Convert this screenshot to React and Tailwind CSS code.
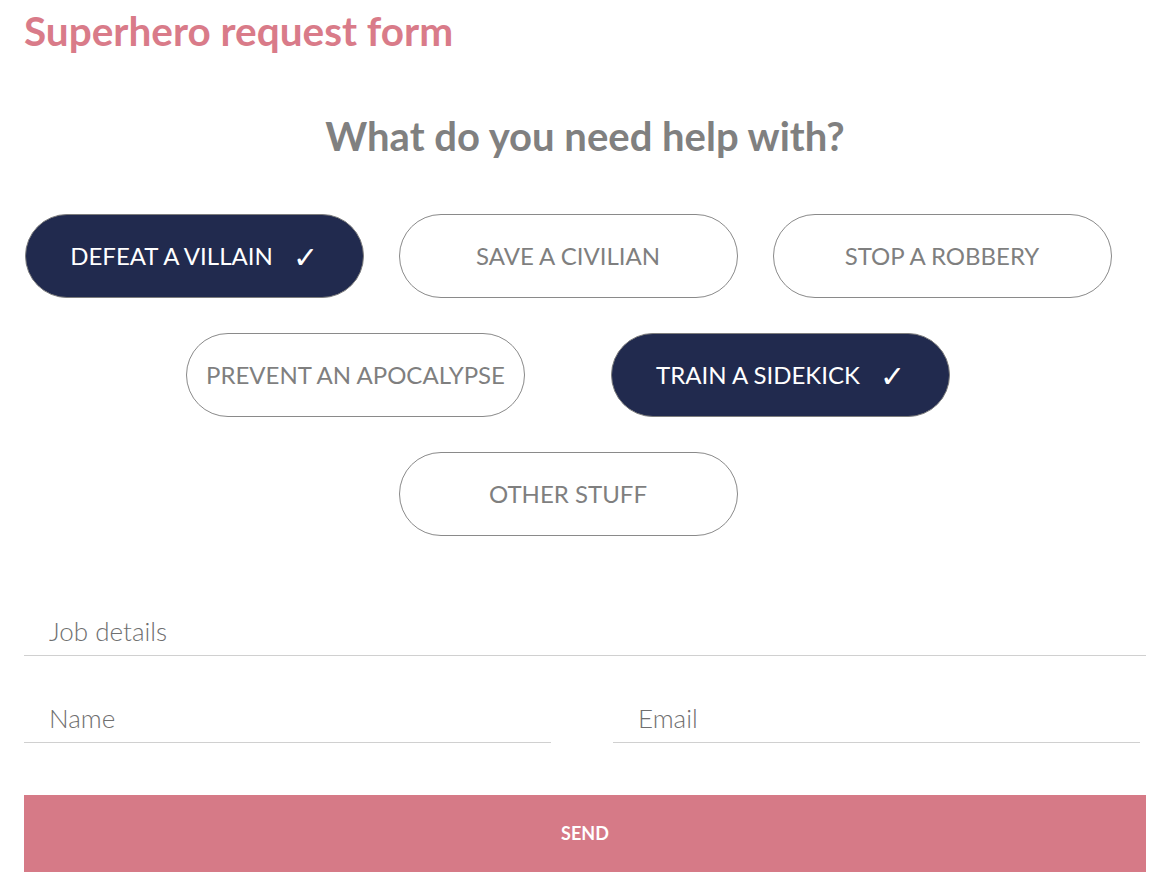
import React, { useState } from 'react'

const rows = [
  { gap: 'gap-[35px]', items: ['DEFEAT A VILLAIN', 'SAVE A CIVILIAN', 'STOP A ROBBERY'] },
  { gap: 'gap-[86px]', items: ['PREVENT AN APOCALYPSE', 'TRAIN A SIDEKICK'] },
  { gap: 'gap-[35px]', items: ['OTHER STUFF'] },
]

export default function App() {
  const [picked, setPicked] = useState(['DEFEAT A VILLAIN', 'TRAIN A SIDEKICK'])

  const toggle = (o) =>
    setPicked((p) => (p.includes(o) ? p.filter((x) => x !== o) : [...p, o]))

  return (
    <div className="min-h-screen bg-white pl-6 pr-[18px] font-['Lato',sans-serif]">
      <h1 className="pt-[7px] text-[40.5px] font-bold leading-[48px] text-[#d97b89]">
        Superhero request form
      </h1>

      <h2 className="mt-[57px] text-center text-[40px] font-bold leading-[48px] text-[#808080]">
        What do you need help with?
      </h2>

      <div className="mt-[54px] flex flex-col gap-[35px] pr-[34px]">
        {rows.map((row, i) => (
          <div key={i} className={'flex justify-center ' + row.gap}>
            {row.items.map((o) => {
              const on = picked.includes(o)
              return (
                <button
                  key={o}
                  onClick={() => toggle(o)}
                  className={
                    on
                      ? 'flex h-[84px] w-[339px] items-center justify-center rounded-full border-[1.5px] border-[#7d7d7d] bg-[#212a4e] text-[24px] text-white'
                      : 'flex h-[84px] w-[339px] items-center justify-center rounded-full border-[1.5px] border-[#8a8a8a] bg-white text-[24px] text-[#7f7f7f]'
                  }
                >
                  <span>{o}</span>
                  {on && <span className="ml-[20px] text-[30px] leading-none">✓</span>}
                </button>
              )
            })}
          </div>
        ))}
      </div>

      <form className="mt-[68px]" onSubmit={(e) => e.preventDefault()}>
        <input
          placeholder="Job details"
          className="block h-[52px] w-full border-b-[1.5px] border-[#d0d0d0] px-[25px] pt-[2px] text-[26px] font-light text-[#555] outline-none placeholder:text-[#6f6f6f]"
        />
        <div className="mt-[35px] flex gap-[62px]">
          <input
            placeholder="Name"
            className="block h-[52px] w-[527px] border-b-[1.5px] border-[#d0d0d0] px-[25px] pt-[2px] text-[26px] font-light text-[#555] outline-none placeholder:text-[#6f6f6f]"
          />
          <input
            placeholder="Email"
            className="block h-[52px] w-[527px] border-b-[1.5px] border-[#d0d0d0] px-[25px] pt-[2px] text-[26px] font-light text-[#555] outline-none placeholder:text-[#6f6f6f]"
          />
        </div>
        <button
          type="submit"
          className="mt-[52px] block h-[77px] w-full bg-[#d67a87] text-[18px] font-bold text-white"
        >
          SEND
        </button>
      </form>
    </div>
  )
}
